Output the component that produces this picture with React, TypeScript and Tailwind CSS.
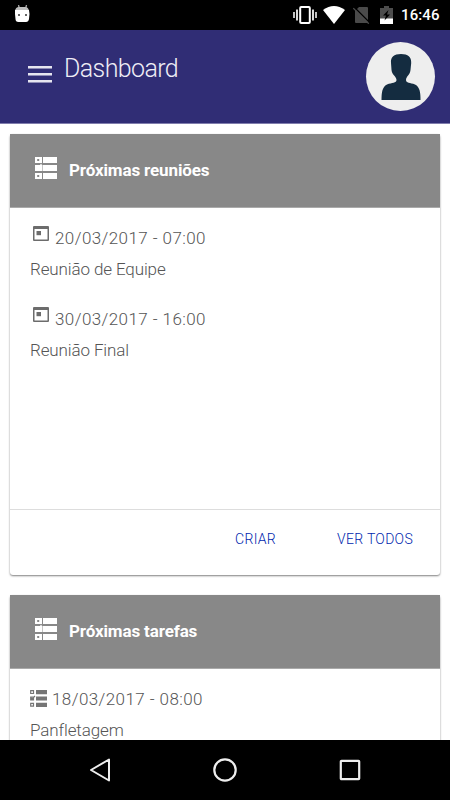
import React from "react";

interface Entry {
  date: string;
  title: string;
}

const MEETINGS: Entry[] = [
  { date: "20/03/2017 - 07:00", title: "Reunião de Equipe" },
  { date: "30/03/2017 - 16:00", title: "Reunião Final" },
];

const TASKS: Entry[] = [{ date: "18/03/2017 - 08:00", title: "Panfletagem" }];

const StatusBar: React.FC = () => (
  <div className="flex h-[30px] shrink-0 items-center bg-black pl-[14px] pr-[10px]">
    {/* Debug robot */}
    <svg className="mb-[2px] h-[18px] w-4" viewBox="0 0 16 18">
      <path d="M4.500 0l1 4M12.500 0l-1 4" stroke="#aaa" strokeWidth="1.300" />
      <path d="M1 6q.5-4 4-4h6q3.500 0 4 4z" fill="#bdbdbd" />
      <path d="M1 5h14l.5 4-.5 5q-.5 3-3 3H4.500q-3 0-3-3l-.5-5z" fill="#fff" />
      <path d="M4 9h2v2H4zM11 9h2v2h-2z" fill="#666" />
    </svg>
    <div className="ml-auto flex items-center">
      {/* Vibrate */}
      <svg className="h-[18px] w-6" viewBox="0 0 24 18" fill="none" stroke="#fff">
        <rect x="7.200" y="1" width="9.600" height="16" rx="1" strokeWidth="2" />
        <path d="M4 3.500v11M20 3.500v11" strokeWidth="1.700" />
        <path d="M1 6v6M23 6v6" strokeWidth="1.500" />
      </svg>
      {/* Wifi */}
      <svg className="ml-[6px] h-[18px] w-[22px]" viewBox="0 0 22 18">
        <path d="M0 4Q11-4 22 4L11 18z" fill="#fff" />
      </svg>
      {/* No sim */}
      <svg className="ml-[8px] h-[18px] w-[17px]" viewBox="0 0 17 18">
        <path d="M6 1h8q1 0 1 1v14q0 1-1 1H3q-1 0-1-1V5z" fill="#4a4a4a" />
        <path d="M1 1l16 16" stroke="#000" strokeWidth="1.500" />
        <path d="M.3 2.200l15.500 15.500" stroke="#4d4d4d" strokeWidth="1.300" />
      </svg>
      {/* Battery */}
      <svg className="ml-[10px] h-[18px] w-[13px]" viewBox="0 0 13 18">
        <path d="M0 2h4V0h5v2h4v16H0z" fill="#4d4d4d" />
        <path d="M0 12.500h13V18H0z" fill="#fff" />
        <path d="M8.500 4L3 9.500h3L4.500 14.500l5.500-6H7z" fill="#000" />
      </svg>
      <span className="ml-2 w-[39px] whitespace-nowrap font-['Roboto',sans-serif] text-[15px] font-medium leading-none tracking-[0.1px] text-white">
        16:46
      </span>
    </div>
  </div>
);

const Header: React.FC = () => (
  <header className="flex h-[94px] shrink-0 border-b border-[#807dad] bg-[#302d75] pl-7 pr-[15px]">
    <button className="mt-[36px] flex h-[17px] w-6 flex-col justify-between">
      <span className="h-[3px] w-full border-b border-[#8f8db6] bg-[#e6e5ef]"></span>
      <span className="h-[3px] w-full border-b border-[#8f8db6] bg-[#e6e5ef]"></span>
      <span className="h-[3px] w-full border-b border-[#8f8db6] bg-[#e6e5ef]"></span>
    </button>
    <h1 className="ml-[12px] mt-[23px] text-[25px] font-light leading-8 tracking-[-0.6px] text-[#eeedf5]">
      Dashboard
    </h1>
    <div className="ml-auto mt-3 flex h-[69px] w-[69px] justify-center overflow-hidden rounded-full bg-[#eee]">
      <svg className="mt-3 h-[46px] w-10" viewBox="0 0 40 46">
        <path
          d="M20 0C27 0 30.500 3 30.200 9L29.500 16C29 21 25 22.500 25 26C25 29 29 28.500 34 30.500C39 33 39.500 39 39.500 46H.5C.5 39 1 33 6 30.500C11 28.500 15.500 29 15.500 26C15.500 22.500 11 21 10.500 16L10 9C9.500 3 13 0 20 0z"
          fill="#142c40"
        />
      </svg>
    </div>
  </header>
);

const ListIcon: React.FC<{ className: string }> = ({ className }) => (
  <svg className={className} viewBox="0 0 22 22" fill="currentColor">
    <path
      fillRule="evenodd"
      d="M0 0h7v6H0zM2.200 2v2h2V2zM8 0h14v6H8zM7.500 8H22v6H7.500zM8 16h14v6H8zM0 16h7v6H0zM2.200 18v2h2v-2zM0 8h5l1-1.500L7 8v6H0z"
    />
  </svg>
);

const TaskIcon: React.FC = () => (
  <svg className="mt-[7px] h-[17px] w-[17px]" viewBox="0 0 17 17">
    <path d="M6 0h11v4.300H6zM6 6.500h11v4H6zM6 12.700h11V17H6z" fill="#757575" />
    <path
      d="M.7.7h2.800v2.800H.7zM.7 7h2.800v2.800H.7zM.7 13.300h2.800v2.800H.7zM1 7.500l1 1.500 3-3"
      fill="none"
      stroke="#757575"
      strokeWidth="1.200"
    />
  </svg>
);

const CalendarIcon: React.FC = () => (
  <svg className="ml-[3px] mr-px mt-[4px] h-[15px] w-4" viewBox="0 0 16 15">
    <path
      fillRule="evenodd"
      d="M1 0h14q1 0 1 1v13q0 1-1 1H1q-1 0-1-1V1q0-1 1-1zM1.500 3v10.500h13V3z"
      fill="#6c6c6c"
    />
    <path d="M3.500 5h4.500v4.200H3.500z" fill="#6c6c6c" />
  </svg>
);

interface CardProps {
  title: string;
  entries: Entry[];
  icon: React.ReactNode;
  actions?: string[];
}

const Card: React.FC<CardProps> = ({ title, entries, icon, actions }) => (
  <section className="flex h-[441px] shrink-0 flex-col rounded-[3px] bg-white shadow-[0_1px_2px_rgba(0,0,0,0.5)]">
    <div className="flex h-[74px] shrink-0 items-center border-b border-[#aaa] bg-[#888] pl-[25px] text-white">
      <ListIcon className="mb-[5px] h-[22px] w-[22px]" />
      <h2 className="ml-3 text-[17px] font-bold tracking-[-0.13px]">{title}</h2>
    </div>
    <ul className="flex flex-1 flex-col gap-[17px] px-5 pt-[14px] text-[17px] font-light text-[#555]">
      {entries.map((entry) => (
        <li key={entry.date}>
          <div className="flex h-8 gap-[5px]">
            {icon}
            <span className="leading-8 tracking-[0.42px]">{entry.date}</span>
          </div>
          <p className="h-8 leading-[30px] tracking-[-0.12px]">{entry.title}</p>
        </li>
      ))}
    </ul>
    {actions && (
      <div className="flex h-[66px] shrink-0 items-start justify-end gap-[61px] border-t border-[#ddd] pr-[27px] pt-[17px] text-[14px] font-light leading-6 tracking-[0.3px] text-[#001fae]">
        {actions.map((action) => (
          <button key={action}>{action}</button>
        ))}
      </div>
    )}
  </section>
);

const NavigationBar: React.FC = () => (
  <nav className="flex h-[60px] shrink-0 items-center justify-center gap-[101px] bg-black">
    <svg className="h-6 w-6" viewBox="0 0 24 24" fill="none" stroke="#eee" strokeWidth="2">
      <path d="M21 1.500v21L3 12z" strokeLinejoin="round" />
    </svg>
    <svg className="h-6 w-6" viewBox="0 0 24 24" fill="none" stroke="#eee" strokeWidth="2.200">
      <circle cx="12" cy="12" r="10.700" />
    </svg>
    <svg className="h-6 w-6" viewBox="0 0 24 24" fill="none" stroke="#eee" strokeWidth="2.200">
      <rect x="2.800" y="2.800" width="18.400" height="18.400" rx="0.700" />
    </svg>
  </nav>
);

export default function App() {
  return (
    <div className="flex h-[800px] w-[450px] flex-col overflow-hidden bg-white font-['Roboto',sans-serif]">
      <StatusBar />
      <Header />
      <main className="flex min-h-0 flex-1 flex-col gap-5 overflow-hidden px-[10px] pt-[10px]">
        <Card
          title="Próximas reuniões"
          entries={MEETINGS}
          icon={<CalendarIcon />}
          actions={["CRIAR", "VER TODOS"]}
        />
        <Card title="Próximas tarefas" entries={TASKS} icon={<TaskIcon />} />
      </main>
      <NavigationBar />
    </div>
  );
}
